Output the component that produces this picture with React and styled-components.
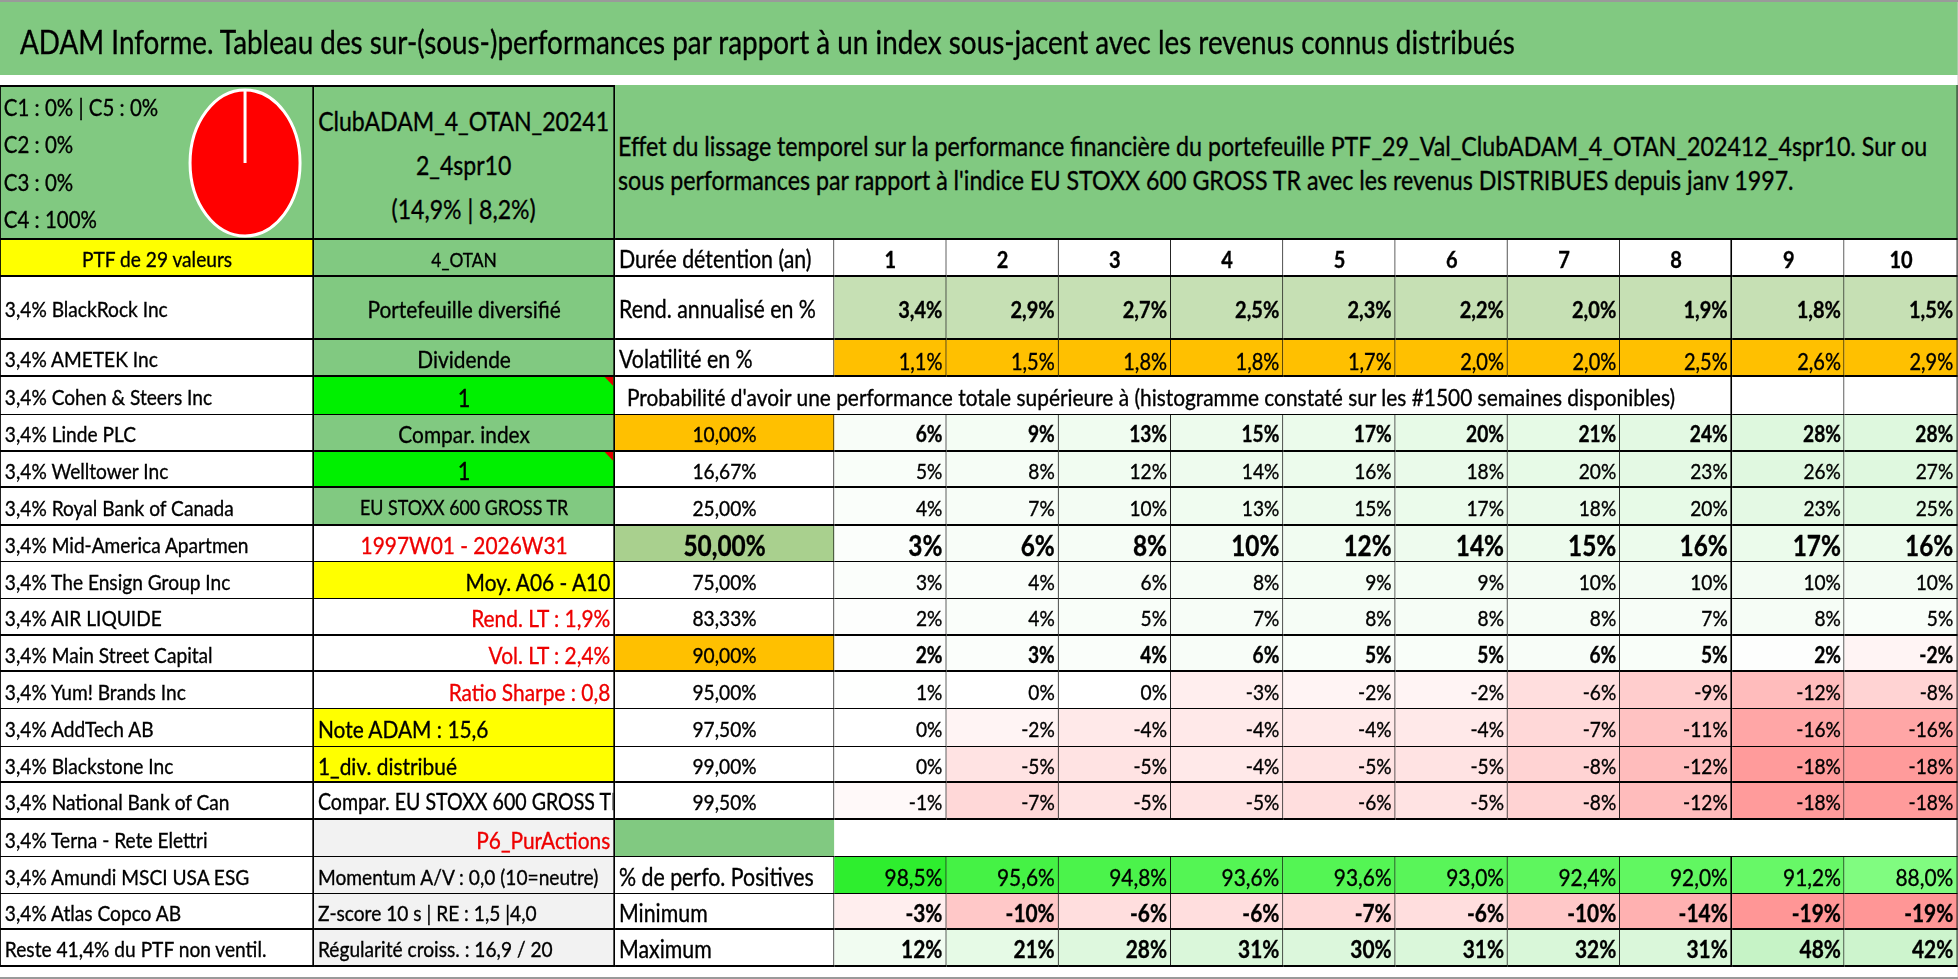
import React from "react";
import styled, { createGlobalStyle } from "styled-components";

// The sheet is laid out wide and squeezed horizontally, like the narrow Excel font of the capture.
const S = 0.87;
const W = 1958 / S;
const u = (px) => `${(px / S).toFixed(2)}px`;

const FONT = 'Lato, "Open Sans", "Liberation Sans", sans-serif';

const GREEN = "#81c981";
const LGREEN = "#c6e0b4";
const MIDGREEN = "#a9d08e";
const BRIGHT = "#00f000";
const YELLOW = "#ffff00";
const ORANGE = "#ffc000";
const GRAY = "#f2f2f2";
const RED = "#ee0000";

const ROW_H = [37, 63, 37, 38, 37, 36, 38, 36, 37, 37, 36, 37, 38, 36, 37, 37, 37, 36, 37];
const THICK = [1, 1, 1, 0, 1, 1, 1, 0, 0, 1, 1, 0, 0, 1, 1, 0, 0, 1, 1];

const GlobalStyle = createGlobalStyle`
  html, body { margin: 0; padding: 0; overflow: hidden; background: #fff; }
  body { font-family: ${FONT}; }
`;

const Page = styled.div`
  width: 1958px;
  height: 979px;
  overflow: hidden;
`;

const Sheet = styled.div`
  display: grid;
  grid-template-columns: ${u(314)} ${u(301)} ${u(219)} repeat(10, 1fr);
  grid-template-rows: 73px 10px 155px ${ROW_H.map((h) => h + "px").join(" ")} 10px;
  width: ${W.toFixed(2)}px;
  height: 979px;
  box-sizing: border-box;
  transform: scaleX(${S});
  transform-origin: 0 0;
  border-top: 2px solid #9a9a9a;
  border-bottom: 2px solid #9a9a9a;
  border-right: 1px solid #9a9a9a;
  font-family: ${FONT};
  font-weight: 400;
  -webkit-text-stroke: 0.35px currentColor;
  color: #000;
`;

const TitleBar = styled.div`
  grid-column: 1 / -1;
  background: ${GREEN};
  display: flex;
  align-items: center;
  padding: 6px 0 0 ${u(20)};
  font-size: 32px;
  white-space: nowrap;
`;

const Strip = styled.div`
  grid-column: 1 / -1;
  background: #fff;
`;

const InfoCell = styled.div`
  box-sizing: border-box;
  background: ${GREEN};
  border-top: 2px solid #000;
  border-left: 1px solid #000;
  border-right: 2px solid #000;
  border-bottom: 2px solid #000;
  display: flex;
  align-items: center;
  justify-content: space-between;
  padding: 0 ${u(9)} 0 ${u(3)};
`;

const Labels = styled.div`
  font-size: 23.5px;
  line-height: 37.5px;
  padding-top: 2px;
  white-space: nowrap;
`;

const NameBlock = styled.div`
  box-sizing: border-box;
  background: ${GREEN};
  border-top: 2px solid #000;
  border-right: 2px solid #000;
  border-bottom: 2px solid #000;
  display: flex;
  flex-direction: column;
  align-items: center;
  justify-content: center;
  padding-top: 4px;
  font-size: 26.5px;
  line-height: 44px;
  white-space: nowrap;
`;

const Summary = styled.div`
  grid-column: 3 / -1;
  box-sizing: border-box;
  background: ${GREEN};
  border-bottom: 2px solid #000;
  border-right: 1px solid #000;
  display: flex;
  flex-direction: column;
  justify-content: center;
  padding: 2px 0 0 ${u(3)};
  font-size: 26.7px;
  line-height: 34px;
  white-space: nowrap;
`;

const justify = { left: "flex-start", center: "center", right: "flex-end" };

const Cell = styled.div`
  box-sizing: border-box;
  position: relative;
  display: flex;
  align-items: ${(p) => p.$valign || "center"};
  justify-content: ${(p) => justify[p.$align || "left"]};
  padding: ${(p) => (p.$valign === "flex-end" ? "0" : "2px")} ${u(3)} 0 ${(p) => u(p.$indent || 4)};
  grid-column: ${(p) => p.$span || "auto"};
  background: ${(p) => p.$bg || "#fff"};
  color: ${(p) => p.$color || "#000"};
  font-size: ${(p) => p.$size || 22}px;
  font-weight: ${(p) => (p.$bold ? 700 : 400)};
  border-left: ${(p) => (p.$first ? "1px solid #000" : "none")};
  border-right: ${(p) => (p.$br ?? 1)}px solid #000;
  border-bottom: ${(p) => (p.$bb ?? 1)}px solid #000;
  white-space: nowrap;
  overflow: hidden;
`;

const Corner = styled.span`
  position: absolute;
  top: 0;
  right: 0;
  width: 0;
  height: 0;
  border-top: 9px solid #e00000;
  border-left: ${u(9)} solid transparent;
`;

function Pie() {
  return (
    <svg width={116 / S} height="152" viewBox="0 0 116 152" preserveAspectRatio="none">
      <ellipse cx="58" cy="76" rx="55" ry="73" fill="#ff0000" stroke="#fff" strokeWidth="3" />
      <line x1="58" y1="3" x2="58" y2="76" stroke="#fff" strokeWidth="3" />
    </svg>
  );
}

const hex = (h) => [1, 3, 5].map((i) => parseInt(h.slice(i, i + 2), 16));
const mix = (a, b, t) => {
  const pa = hex(a);
  const pb = hex(b);
  return `rgb(${pa.map((x, i) => Math.round(x + (pb[i] - x) * t)).join(",")})`;
};
const scale = (v) =>
  v >= 0
    ? mix("#ffffff", "#c4f2c4", Math.min(1, v / 50))
    : mix("#ffffff", "#ff9090", Math.min(1, -v / 20));
const positiveScale = (v) => mix("#2eee2e", "#80fc80", Math.max(0, Math.min(1, (98.5 - v) / 10.5)));

const pct = (v) => `${v}%`;

const B = {
  green: (text, size = 24) => ({ text, bg: GREEN, align: "center", size }),
  one: () => ({ text: "1", bg: BRIGHT, align: "center", corner: true, size: 25 }),
  red: (text, align = "right") => ({ text, color: RED, align, size: 24 }),
  yellow: (text, align) => ({ text, bg: YELLOW, align, size: 24 }),
  gray: (text) => ({ text, bg: GRAY, align: "left", size: 22 }),
};

const prob = (p, v, opts = {}) => ({ kind: "prob", p, v, ...opts });

const ROWS = [
  {
    name: "PTF de 29 valeurs",
    nameBg: YELLOW,
    nameAlign: "center",
    b: { text: "4_OTAN", bg: GREEN, align: "center", size: 20 },
    c: "Durée détention (an)",
    kind: "head",
  },
  {
    name: "3,4% BlackRock Inc",
    b: B.green("Portefeuille diversifié"),
    c: "Rend. annualisé en %",
    kind: "rend",
    v: ["3,4%", "2,9%", "2,7%", "2,5%", "2,3%", "2,2%", "2,0%", "1,9%", "1,8%", "1,5%"],
  },
  {
    name: "3,4% AMETEK Inc",
    b: B.green("Dividende"),
    c: "Volatilité en %",
    kind: "vol",
    v: ["1,1%", "1,5%", "1,8%", "1,8%", "1,7%", "2,0%", "2,0%", "2,5%", "2,6%", "2,9%"],
  },
  { name: "3,4% Cohen & Steers Inc", b: B.one(), kind: "note" },
  { name: "3,4% Linde PLC", b: B.green("Compar. index"), ...prob("10,00%", [6, 9, 13, 15, 17, 20, 21, 24, 28, 28], { cbg: ORANGE, bold: true }) },
  { name: "3,4% Welltower Inc", b: B.one(), ...prob("16,67%", [5, 8, 12, 14, 16, 18, 20, 23, 26, 27]) },
  { name: "3,4% Royal Bank of Canada", b: B.green("EU STOXX 600 GROSS TR", 20.5), ...prob("25,00%", [4, 7, 10, 13, 15, 17, 18, 20, 23, 25]) },
  { name: "3,4% Mid-America Apartmen", b: B.red("1997W01 - 2026W31", "center"), ...prob("50,00%", [3, 6, 8, 10, 12, 14, 15, 16, 17, 16], { cbg: MIDGREEN, bold: true, big: true }) },
  { name: "3,4% The Ensign Group Inc", b: B.yellow("Moy. A06 - A10", "right"), ...prob("75,00%", [3, 4, 6, 8, 9, 9, 10, 10, 10, 10]) },
  { name: "3,4% AIR LIQUIDE", b: B.red("Rend. LT : 1,9%"), ...prob("83,33%", [2, 4, 5, 7, 8, 8, 8, 7, 8, 5]) },
  { name: "3,4% Main Street Capital", b: B.red("Vol. LT : 2,4%"), ...prob("90,00%", [2, 3, 4, 6, 5, 5, 6, 5, 2, -2], { cbg: ORANGE, bold: true }) },
  { name: "3,4% Yum! Brands Inc", b: B.red("Ratio Sharpe : 0,8"), ...prob("95,00%", [1, 0, 0, -3, -2, -2, -6, -9, -12, -8]) },
  { name: "3,4% AddTech AB", b: B.yellow("Note ADAM : 15,6", "left"), ...prob("97,50%", [0, -2, -4, -4, -4, -4, -7, -11, -16, -16]) },
  { name: "3,4% Blackstone Inc", b: B.yellow("1_div. distribué", "left"), ...prob("99,00%", [0, -5, -5, -4, -5, -5, -8, -12, -18, -18]) },
  { name: "3,4% National Bank of Can", b: { text: "Compar. EU STOXX 600 GROSS TR", align: "left", size: 22.5 }, ...prob("99,50%", [-1, -7, -5, -5, -6, -5, -8, -12, -18, -18]) },
  { name: "3,4% Terna - Rete Elettri", b: { text: "P6_PurActions", bg: GRAY, color: RED, align: "right", size: 24 }, kind: "blank" },
  {
    name: "3,4% Amundi MSCI USA ESG",
    b: B.gray("Momentum A/V : 0,0 (10=neutre)"),
    c: "% de perfo. Positives",
    kind: "positive",
    v: [98.5, 95.6, 94.8, 93.6, 93.6, 93.0, 92.4, 92.0, 91.2, 88.0],
  },
  { name: "3,4% Atlas Copco AB", b: B.gray("Z-score 10 s | RE : 1,5 |4,0"), c: "Minimum", kind: "min", v: [-3, -10, -6, -6, -7, -6, -10, -14, -19, -19] },
  { name: "Reste 41,4% du PTF non ventil.", b: B.gray("Régularité croiss. : 16,9 / 20"), c: "Maximum", kind: "max", v: [12, 21, 28, 31, 30, 31, 32, 31, 48, 42] },
];

const colBorder = (k) => (k === 7 ? 2 : 1);
const fmtPos = (v) => v.toFixed(1).replace(".", ",") + "%";

function ValueCells({ row, bb }) {
  const cells = [];
  for (let k = 0; k < 10; k++) {
    const common = { key: k, $bb: bb, $br: colBorder(k), $align: "right" };
    if (row.kind === "head") {
      cells.push(<Cell {...common} $align="center" $bold $size={23}>{k + 1}</Cell>);
    } else if (row.kind === "rend") {
      cells.push(<Cell {...common} $bg={LGREEN} $bold $size={23}>{row.v[k]}</Cell>);
    } else if (row.kind === "vol") {
      cells.push(<Cell {...common} $bg={ORANGE} $valign="flex-end" $size={23}>{row.v[k]}</Cell>);
    } else if (row.kind === "prob") {
      cells.push(
        <Cell {...common} $bg={scale(row.v[k])} $bold={row.bold} $size={row.big ? 28 : 22}>
          {pct(row.v[k])}
        </Cell>
      );
    } else if (row.kind === "positive") {
      cells.push(<Cell {...common} $bg={positiveScale(row.v[k])} $size={24}>{fmtPos(row.v[k])}</Cell>);
    } else {
      cells.push(<Cell {...common} $bg={scale(row.v[k])} $bold $size={24}>{pct(row.v[k])}</Cell>);
    }
  }
  return cells;
}

function SheetRow({ row, index }) {
  const bb = THICK[index] ? 2 : 1;
  const b = row.b;
  return (
    <>
      <Cell $first $bb={bb} $br={2} $bg={row.nameBg} $align={row.nameAlign}>
        {row.name}
      </Cell>
      <Cell $bb={bb} $br={2} $bg={b.bg} $align={b.align} $color={b.color} $size={b.size}>
        {b.text}
        {b.corner && <Corner />}
      </Cell>
      {row.kind === "note" && (
        <>
          <Cell $span="3 / span 9" $bb={bb} $br={2} $indent={12} $size={24}>
            Probabilité d'avoir une performance totale supérieure à (histogramme constaté sur les #1500 semaines disponibles)
          </Cell>
          <Cell $bb={bb} />
          <Cell $bb={bb} />
        </>
      )}
      {row.kind === "blank" && (
        <>
          <Cell $bg={GREEN} $bb={bb} $br={0} />
          <Cell $span="span 10" $bb={bb} />
        </>
      )}
      {row.kind === "prob" && (
        <>
          <Cell $bb={bb} $align="center" $bg={row.cbg} $bold={row.big} $size={row.big ? 28 : 22}>
            {row.p}
          </Cell>
          <ValueCells row={row} bb={bb} />
        </>
      )}
      {["head", "rend", "vol", "positive", "min", "max"].includes(row.kind) && (
        <>
          <Cell $bb={bb} $size={24.5}>{row.c}</Cell>
          <ValueCells row={row} bb={bb} />
        </>
      )}
    </>
  );
}

export default function App() {
  return (
    <Page>
      <GlobalStyle />
      <Sheet>
        <TitleBar>
          ADAM Informe. Tableau des sur-(sous-)performances par rapport à un index sous-jacent avec les revenus connus distribués
        </TitleBar>
        <Strip />
        <InfoCell>
          <Labels>
            <div>C1 : 0% | C5 : 0%</div>
            <div>C2 : 0%</div>
            <div>C3 : 0%</div>
            <div>C4 : 100%</div>
          </Labels>
          <Pie />
        </InfoCell>
        <NameBlock>
          <div>ClubADAM_4_OTAN_20241</div>
          <div>2_4spr10</div>
          <div>(14,9% | 8,2%)</div>
        </NameBlock>
        <Summary>
          <div>
            Effet du lissage temporel sur la performance financière du portefeuille PTF_29_Val_ClubADAM_4_OTAN_202412_4spr10. Sur ou
          </div>
          <div>
            sous performances par rapport à l'indice EU STOXX 600 GROSS TR avec les revenus DISTRIBUES depuis janv 1997.
          </div>
        </Summary>
        {ROWS.map((row, i) => (
          <SheetRow key={i} row={row} index={i} />
        ))}
        <Strip />
      </Sheet>
    </Page>
  );
}
